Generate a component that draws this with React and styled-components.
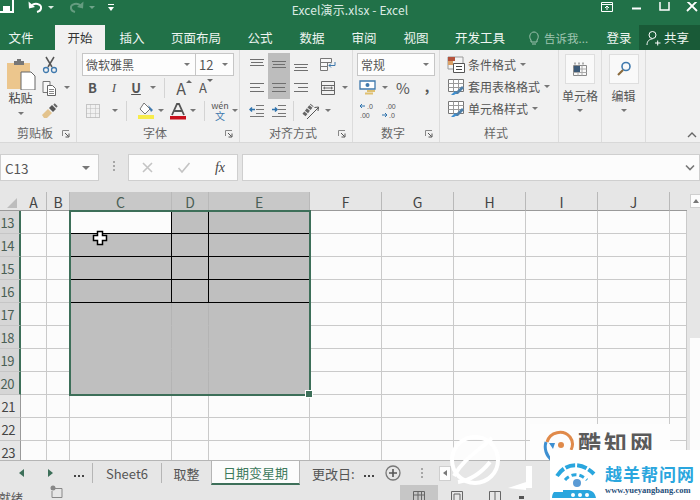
import styled, { createGlobalStyle } from 'styled-components';

const GlobalStyle = createGlobalStyle`
  html, body { margin: 0; padding: 0; background: #fff; }
  body { font-family: "Noto Sans CJK SC", "Noto Sans", sans-serif; color: #444; }
`;

const columns = [
  { name: 'A', w: 26 }, { name: 'B', w: 23 }, { name: 'C', w: 102, sel: true }, { name: 'D', w: 37, sel: true },
  { name: 'E', w: 101, sel: true }, { name: 'F', w: 72 }, { name: 'G', w: 72 }, { name: 'H', w: 72 },
  { name: 'I', w: 72 }, { name: 'J', w: 72 }, { name: '', w: 17 },
];
const rows = [13, 14, 15, 16, 17, 18, 19, 20, 21, 22, 23];
const tabs = [
  { label: '文件', w: 42, mr: 13 }, { label: '开始', w: 50, active: true, mr: 1 }, { label: '插入', w: 52 },
  { label: '页面布局', w: 76 }, { label: '公式', w: 52 }, { label: '数据', w: 52 }, { label: '审阅', w: 52 },
  { label: '视图', w: 52 }, { label: '开发工具', w: 76 },
];

const App = styled.div`
  position: relative;
  width: 700px;
  height: 500px;
  overflow: hidden;
  background: #e6e6e6;
`;

const TitleBar = styled.div`
  display: grid;
  grid-template-columns: 1fr auto 1fr;
  height: 25px;
  padding-bottom: 7px;
  box-sizing: border-box;
  align-items: center;
  background: #217148;
  color: #dcebe3;
  font-size: 12px;
`;
const Quick = styled.div`
  display: flex;
  align-items: center;
  margin-top: -4px;
`;
const WindowButtons = styled.div`
  display: flex;
  justify-content: flex-end;
  align-items: center;
  gap: 13px;
  margin-top: -4px;
  padding-right: 0;
`;
const TitleText = styled.div`
  letter-spacing: 0.1px;
`;

const TabRow = styled.div`
  display: flex;
  height: 25px;
  background: #217148;
  color: #eef5f1;
  font-size: 12.5px;
`;
const Tab = styled.div`
  width: ${p => p.$w}px;
  margin-right: ${p => p.$mr || 0}px;
  display: flex;
  align-items: center;
  justify-content: center;
  background: ${p => (p.$active ? '#f1f1f1' : 'transparent')};
  color: ${p => (p.$active ? '#333' : 'inherit')};
`;
const Hint = styled.div`
  width: 81px;
  display: flex;
  align-items: center;
  gap: 4px;
  padding-left: 10px;
  box-sizing: border-box;
  color: #9fc4b0;
  font-size: 11.5px;
  white-space: nowrap;
`;
const Login = styled.div`
  width: 40px;
  display: flex;
  align-items: center;
  justify-content: center;
`;
const Share = styled.div`
  flex: 1;
  display: flex;
  align-items: center;
  gap: 3px;
  padding-left: 7px;
  background: #195a37;
`;

const Ribbon = styled.div`
  display: flex;
  height: 93px;
  background: #f1f1f1;
  border-bottom: 1px solid #d8d8d8;
  box-sizing: border-box;
`;
const Group = styled.div`
  width: ${p => p.$w}px;
  box-sizing: border-box;
  border-right: 1px solid #dcdcdc;
  display: flex;
  flex-direction: column;
`;
const GroupBody = styled.div`
  height: 69px;
  padding: 3px 0 0 ${p => p.$pad || 0}px;
  box-sizing: border-box;
  display: flex;
  flex-direction: ${p => p.$dir || 'column'};
`;
const GroupLabel = styled.div`
  flex: 1;
  display: grid;
  grid-template-columns: 1fr auto 1fr;
  align-items: center;
  font-size: 12px;
  color: #666;
  padding: 2px 6px 0 0;
  margin-top: 1px;
`;
const Launcher = styled.svg`
  justify-self: end;
  width: 8px;
  height: 8px;
  margin-top: 4px;
`;
const ToolRow = styled.div`
  display: flex;
  align-items: center;
  height: 23px;
`;
const Slot = styled.div`
  width: ${p => p.$w}px;
  height: 23px;
  flex: none;
  display: flex;
  align-items: center;
  justify-content: center;
  background: ${p => (p.$on ? '#bdbdbd' : 'transparent')};
  font-size: ${p => p.$size || 12}px;
  font-weight: ${p => p.$bold ? 700 : 400};
  font-style: ${p => p.$italic ? 'italic' : 'normal'};
  color: #555;
`;
const Sep = styled.div`
  width: 1px;
  height: 20px;
  background: #d4d4d4;
  margin: 0 ${p => p.$m || 4}px;
  flex: none;
`;
const Caret = styled.span`
  flex: none;
  width: 0;
  height: 0;
  margin: ${p => p.$m || '0 0 0 5px'};
  border-left: 3px solid transparent;
  border-right: 3px solid transparent;
  border-top: 3px solid #777;
`;
const PasteCol = styled.div`
  width: 39px;
  padding-top: 5px;
  padding-left: 2px;
  box-sizing: border-box;
  display: flex;
  flex-direction: column;
  align-items: center;
  font-size: 12px;
  color: #444;
  line-height: 15px;
`;
const SmallCol = styled.div`
  display: flex;
  flex-direction: column;
`;
const Combo = styled.div`
  height: 23px;
  width: ${p => p.$w}px;
  margin-right: ${p => p.$mr || 0}px;
  box-sizing: border-box;
  padding: 0 5px 0 3px;
  border: 1px solid #c6c6c6;
  background: #fdfdfd;
  display: flex;
  align-items: center;
  justify-content: space-between;
  font-size: 12px;
  color: #555;
`;
const StyleRow = styled.div`
  height: 23px;
  display: flex;
  align-items: center;
  gap: 3px;
  font-size: 12px;
  color: #555;
`;
const BigButton = styled.div`
  width: 30px;
  height: 30px;
  box-sizing: border-box;
  background: #f9f9f9;
  border: 1px solid #dedede;
  display: flex;
  align-items: center;
  justify-content: center;
`;
const BigCol = styled.div`
  height: 100%;
  display: flex;
  flex-direction: column;
  align-items: center;
  font-size: 12px;
  color: #555;
  padding-top: 4px;
  box-sizing: border-box;
  line-height: 17px;
  gap: 3px;
`;
const RibbonEnd = styled.div`
  flex: 1;
  display: flex;
  justify-content: flex-end;
  align-items: flex-end;
  padding: 0 3px 3px 0;
`;

const FormulaRow = styled.div`
  height: 49px;
  box-sizing: border-box;
  padding-top: 11px;
  display: flex;
  align-items: flex-start;
  background: #e6e6e6;
`;
const FormulaBox = styled.div`
  width: ${p => p.$w}px;
  flex: ${p => (p.$w ? 'none' : 1)};
  height: 27px;
  margin-left: ${p => p.$ml || 0}px;
  box-sizing: border-box;
  border: 1px solid #cfcfcf;
  background: #fcfcfc;
  display: flex;
  align-items: center;
  justify-content: ${p => p.$justify || 'space-between'};
  padding: 0 4px;
  font-size: 13.5px;
  color: #555;
`;
const Dots = styled.div`
  display: flex;
  flex-direction: ${p => p.$row ? 'row' : 'column'};
  gap: 2px;
  margin: ${p => p.$m};
  i {
    display: block;
    width: 2px;
    height: 2px;
    background: ${p => p.$color || '#a6a6a6'};
  }
`;
const FxFont = styled.span`
  font-family: "Liberation Serif", serif;
  font-style: italic;
  font-size: 14px;
  color: #444;
`;

const SheetArea = styled.div`
  display: flex;
  height: 268px;
`;
const Sheet = styled.div`
  position: relative;
  width: 687px;
  height: 268px;
  overflow: hidden;
  display: grid;
  grid-template-columns: 21px ${columns.map(c => c.w + 'px').join(' ')};
  grid-template-rows: 19px;
  grid-auto-rows: 23px;
  background: #fcfcfc;
`;
const Corner = styled.div`
  background: #e6e6e6;
  border-bottom: 1px solid #9a9a9a;
  box-sizing: border-box;
  display: flex;
  justify-content: flex-end;
  align-items: flex-end;
  padding: 0 4px 2px 0;
  &::after {
    content: '';
    width: 0;
    height: 0;
    border-left: 10px solid transparent;
    border-bottom: 10px solid #bdbdbd;
  }
`;
const ColHead = styled.div`
  box-sizing: border-box;
  display: flex;
  align-items: center;
  justify-content: center;
  background: ${p => (p.$sel ? '#c8c8c8' : '#e6e6e6')};
  border-right: ${p => (p.$blank ? 0 : '1px solid #b9b9b9')};
  border-bottom: 1px solid #9a9a9a;
  font-size: 14px;
  color: ${p => (p.$sel ? '#4a5f55' : '#444')};
  padding-top: 2px;
`;
const RowHead = styled.div`
  box-sizing: border-box;
  display: flex;
  align-items: center;
  justify-content: flex-end;
  padding-right: 5px;
  overflow: hidden;
  background: ${p => (p.$sel ? '#d6d6d6' : '#e6e6e6')};
  border-right: ${p => (p.$sel ? '2px solid #3d6f59' : '1px solid #9a9a9a')};
  border-bottom: 1px solid #c6c6c6;
  font-size: 13px;
  letter-spacing: -0.5px;
  color: ${p => (p.$sel ? '#4a5f55' : '#444')};
`;
const Cell = styled.div`
  box-sizing: border-box;
  background: ${p => (p.$sel && !p.$active ? '#bfbfbf' : '#fcfcfc')};
  border-right: 1px solid ${p => (p.$right || '#cacaca')};
  border-bottom: 1px solid ${p => (p.$bottom || '#cacaca')};
`;
const Selection = styled.div`
  position: absolute;
  left: 69px;
  top: 18px;
  width: 242px;
  height: 186px;
  box-sizing: border-box;
  border: 2px solid #3d6f59;
  pointer-events: none;
`;
const Handle = styled.div`
  position: absolute;
  right: -4px;
  bottom: -4px;
  width: 6px;
  height: 6px;
  background: #3d6f59;
  border: 1px solid #fff;
`;
const CursorMark = styled.svg`
  position: absolute;
  left: 92px;
  top: 38px;
  width: 16px;
  height: 16px;
`;
const VScroll = styled.div`
  flex: 1;
  display: flex;
  flex-direction: column;
  align-items: flex-end;
  padding-top: 2px;
  box-sizing: border-box;
`;
const VButton = styled.div`
  width: 10px;
  height: 14px;
  box-sizing: border-box;
  background: #fcfcfc;
  border: 1px solid #cfcfcf;
  border-right: 0;
  display: flex;
  align-items: center;
  justify-content: center;
  &::after {
    content: '';
    border-left: 3px solid transparent;
    border-right: 3px solid transparent;
    border-bottom: 4px solid #777;
  }
`;
const VThumb = styled.div`
  width: 10px;
  height: 115px;
  margin-top: 130px;
  background: #fcfcfc;
`;

const SheetBar = styled.div`
  height: 25px;
  box-sizing: border-box;
  border-top: 1px solid #b5b5b5;
  display: flex;
  align-items: center;
  background: #e6e6e6;
  font-size: 13px;
  color: #555;
`;
const NavArrow = styled.div`
  width: 0;
  height: 0;
  flex: none;
  margin-left: ${p => p.$ml}px;
  border-top: 4px solid transparent;
  border-bottom: 4px solid transparent;
  ${p => (p.$back ? 'border-right: 5px solid #3d6f59;' : 'border-left: 5px solid #3d6f59;')}
`;
const SheetTab = styled.div`
  width: ${p => p.$w}px;
  height: ${p => (p.$active ? 24 : 20)}px;
  align-self: ${p => (p.$active ? 'flex-start' : 'center')};
  flex: none;
  box-sizing: border-box;
  display: flex;
  align-items: center;
  justify-content: center;
  white-space: nowrap;
  background: ${p => (p.$active ? '#fcfcfc' : 'transparent')};
  color: ${p => (p.$active ? '#3d7a5c' : 'inherit')};
  border-left: ${p => (p.$line || p.$active ? '1px solid #b5b5b5' : '0')};
  border-right: ${p => (p.$active ? '1px solid #b5b5b5' : '0')};
  border-bottom: ${p => (p.$active ? '2px solid #3d6f59' : '0')};
`;
const AddSheet = styled.svg`
  width: 16px;
  height: 16px;
  flex: none;
  margin-left: 11px;
`;
const HButton = styled.div`
  width: 12px;
  height: 15px;
  flex: none;
  margin-left: 16px;
  box-sizing: border-box;
  background: #fcfcfc;
  border: 1px solid #cfcfcf;
  display: flex;
  align-items: center;
  justify-content: center;
  &::after {
    content: '';
    border-top: 3px solid transparent;
    border-bottom: 3px solid transparent;
    border-right: 4px solid #777;
  }
`;

const StatusBar = styled.div`
  height: 15px;
  display: flex;
  background: #e6e6e6;
  font-size: 12px;
  color: #555;
  overflow: hidden;
`;
const StatusText = styled.div`
  width: 44px;
  margin-left: -1px;
  padding-top: 4px;
  line-height: 17px;
`;
const ViewGroup = styled.div`
  margin-left: 336px;
  display: flex;
`;
const ViewButton = styled.div`
  width: 38px;
  height: 15px;
  display: flex;
  justify-content: center;
  padding-top: 5px;
  box-sizing: border-box;
  background: ${p => (p.$on ? '#c6c6c6' : 'transparent')};
`;
const ZoomMinus = styled.div`
  width: 5px;
  height: 3px;
  margin: 11px 0 0 5px;
  background: #555;
`;

const Mark = styled.svg`
  position: absolute;
  left: ${p => p.$x}px;
  top: ${p => p.$y}px;
`;
const KuzhiText = styled.div`
  position: absolute;
  left: 530px;
  top: 424px;
  width: 140px;
  height: 36px;
  padding-left: 48px;
  box-sizing: border-box;
  background: #fdfdfd;
  font-size: 23px;
  font-weight: 700;
  line-height: 36px;
  color: #5a5a5a;
  letter-spacing: 3px;
  white-space: nowrap;
`;
const YueBox = styled.div`
  position: absolute;
  left: 550px;
  top: 450px;
  width: 150px;
  height: 50px;
  background: #fff;
  box-sizing: border-box;
  padding: 14px 0 0 55px;
`;
const YueName = styled.div`
  font-size: 17px;
  line-height: 20px;
  font-weight: 700;
  color: #2aa6de;
  letter-spacing: 1px;
  white-space: nowrap;
`;
const YueUrl = styled.div`
  font-family: "Liberation Serif", serif;
  font-size: 8.5px;
  font-weight: 700;
  line-height: 13px;
  color: #1f4e79;
  white-space: nowrap;
`;

const Svg = ({ w = 16, h = 16, children, style }) => (
  <svg width={w} height={h} viewBox={`0 0 ${w} ${h}`} fill="none" style={style}>{children}</svg>
);

const LauncherIcon = () => (
  <Launcher viewBox="0 0 8 8" fill="none">
    <path d="M.5 6V.5H7" stroke="#888" />
    <path d="M3 3l3.5 3.5M7 3.5V7H3.5" stroke="#555" />
  </Launcher>
);

const AlignIcon = ({ v, h = 'c' }) => {
  const y = v === 't' ? 2 : v === 'b' ? 7 : v === 'm' ? 4 : 3;
  const lines = v === 'full' ? [3, 7, 11] : [y, y + 3, y + 6];
  const widths = h === 'l' ? [[1, 15], [1, 11], [1, 15]] : h === 'r' ? [[1, 15], [5, 15], [1, 15]] : [[1, 15], [2, 14], [1, 15]];
  return (
    <Svg>
      {lines.map((ly, i) => (
        <path key={i} d={`M${widths[i][0]} ${ly}.5H${widths[i][1]}`} stroke="#6f6f6f" />
      ))}
    </Svg>
  );
};

const TableThumb = () => (
  <Svg w={18} h={18}>
    <path d="M1.5 2.5h15v12h-15z" fill="#fff" stroke="#777" />
    <path d="M1.5 6.5h15M1.5 10.5h15M6.5 2.5v12M11.5 2.5v12" stroke="#9a9a9a" />
    <path d="M8 16l7-7 2 2-6 6H7z" fill="#4f7fa8" />
    <path d="M4 18l4-4 2 2-3 2z" fill="#3f8fd0" />
  </Svg>
);

const decimalFont = { fontFamily: 'Liberation Sans, sans-serif' };

export default function ExcelWindow() {
  return (
    <App>
      <GlobalStyle />
      <TitleBar>
        <Quick>
          <Svg w={17} h={14} style={{ marginLeft: -2 }}>
            <path d="M1 -2h14v14H1z" stroke="#fff" strokeWidth="2" />
            <path d="M5 6h7v6H5z" fill="#fff" />
          </Svg>
          <Svg w={18} h={14} style={{ marginLeft: 12 }}>
            <path d="M4 6.5c3-4.5 11-3 10 2-.4 2-2 3-4 3.5" stroke="#fff" strokeWidth="2" />
            <path d="M1.500 1.500l.5 7 6-1.500z" fill="#fff" />
          </Svg>
          <Caret style={{ borderTopColor: '#dcebe3' }} $m="0 0 0 3px" />
          <Svg w={18} h={14} style={{ marginLeft: 13, opacity: 0.3 }}>
            <path d="M14 6.500c-3-4.500-11-3-10 2 .4 2 2 3 4 3.500" stroke="#fff" strokeWidth="2" />
            <path d="M16.500 1.500l-.5 7-6-1.500z" fill="#fff" />
          </Svg>
          <Caret style={{ borderTopColor: '#6fa389' }} $m="0 0 0 4px" />
          <Svg w={8} h={9} style={{ marginLeft: 12 }}>
            <path d="M1 1.500h6" stroke="#fff" />
            <path d="M1 4h6L4 8z" fill="#fff" />
          </Svg>
        </Quick>
        <TitleText>Excel演示.xlsx - Excel</TitleText>
        <WindowButtons>
          <Svg w={13} h={11}>
            <path d="M.5.5h11v9H.5z" stroke="#fff" />
            <path d="M.5 2.500h11" stroke="#fff" />
            <path d="M6 8V4.500M4 6l2-2 2 2" stroke="#fff" />
          </Svg>
          <Svg w={16} h={11} style={{ marginLeft: 2 }}><path d="M3 6.500h9" stroke="#fff" strokeWidth="2" /></Svg>
          <Svg w={14} h={11}><path d="M2 -1h9v9H2z" stroke="#fff" strokeWidth="1.500" /></Svg>
          <Svg w={15} h={11}><path d="M2 -1l10 10M12 -1L2 9" stroke="#fff" strokeWidth="1.800" /></Svg>
        </WindowButtons>
      </TitleBar>

      <TabRow>
        {tabs.map(tab => (
          <Tab key={tab.label} $w={tab.w} $mr={tab.mr} $active={tab.active}>{tab.label}</Tab>
        ))}
        <Hint>
          <Svg w={12} h={16}>
            <path d="M3 10C.500 7 2 2 6 2s5.500 5 3 8v2H3z" stroke="#9fc4b0" />
            <path d="M4 14h4" stroke="#9fc4b0" />
          </Svg>
          告诉我...
        </Hint>
        <Login>登录</Login>
        <Share>
          <Svg w={15} h={16}>
            <circle cx="6.500" cy="5" r="3.500" stroke="#fff" />
            <path d="M1 15c0-4 2.500-6 5.500-6M9 13h5.500M11.700 10.500v5" stroke="#fff" />
          </Svg>
          共享
        </Share>
      </TabRow>

      <Ribbon>
        <Group $w={77}>
          <GroupBody $dir="row">
            <PasteCol>
              <Svg w={30} h={32}>
                <path d="M1 5h23v26H1z" fill="#ecc68d" />
                <path d="M8 3h3V1h4v2h3v4H8z" fill="#777" />
                <path d="M15 14h10l4 4v14H15z" fill="#fff" stroke="#666" />
              </Svg>
              <span>粘贴</span>
              <Caret $m="7px 0 0" />
            </PasteCol>
            <SmallCol>
              <Slot $w={22}>
                <Svg w={16} h={18}>
                  <path d="M4 1l6 10M12 1L6 11" stroke="#555" strokeWidth="1.500" />
                  <circle cx="4" cy="14" r="2.500" stroke="#3f79ad" strokeWidth="1.300" />
                  <circle cx="12" cy="14" r="2.500" stroke="#3f79ad" strokeWidth="1.300" />
                </Svg>
              </Slot>
              <ToolRow>
                <Slot $w={20}>
                  <Svg w={16} h={16}>
                    <path d="M2 1.500h7v11H2z" stroke="#777" fill="#f8f8f8" />
                    <path d="M6.500 5.500h5l3 3v7h-8z" stroke="#666" fill="#fff" />
                    <path d="M8 9.500h5M8 11.500h5M8 13.500h5" stroke="#888" />
                  </Svg>
                </Slot>
                <Caret $m="0 0 0 5px" />
              </ToolRow>
              <Slot $w={22}>
                <Svg w={18} h={16}>
                  <path d="M1 12l6-6 4 4-5 5H3z" fill="#e3c38d" />
                  <path d="M8 5l3-3 4 4-3 3z" fill="#555" />
                  <path d="M13 1l3 3" stroke="#666" strokeWidth="2" />
                </Svg>
              </Slot>
            </SmallCol>
          </GroupBody>
          <GroupLabel><span /><span>剪贴板</span><LauncherIcon /></GroupLabel>
        </Group>

        <Group $w={163}>
          <GroupBody $pad={5}>
            <ToolRow>
              <Combo $w={114}>微软雅黑<Caret /></Combo>
              <Combo $w={39} style={{ marginLeft: -1, fontSize: 13 }}>12<Caret /></Combo>
            </ToolRow>
            <ToolRow>
              <Slot $w={21} $bold $size={13}>B</Slot>
              <Slot $w={22} $italic $size={13} style={{ fontFamily: 'Liberation Serif, serif' }}>I</Slot>
              <Slot $w={22} $bold $size={13} style={{ textDecoration: 'underline' }}>U</Slot>
              <Caret $m="0 0 0 3px" />
              <Sep $m={8} />
              <Slot $w={22} $size={16}>
                A
                <Svg w={6} h={10} style={{ marginBottom: 8 }}><path d="M0 4l3-3 3 3z" fill="#666" /></Svg>
              </Slot>
              <Slot $w={22} $size={13}>
                A
                <Svg w={6} h={12} style={{ marginBottom: 8 }}><path d="M0 1h6L3 4z" fill="#666" /></Svg>
              </Slot>
            </ToolRow>
            <ToolRow>
              <Slot $w={22}>
                <Svg w={16} h={16}>
                  <path d="M1.500 1.500h13v13h-13z" stroke="#999" strokeDasharray="1 1" />
                  <path d="M1.500 5.500h13M1.500 10.500h13M5.500 1.500v13M10.500 1.500v13" stroke="#bbb" strokeDasharray="1 1" />
                </Svg>
              </Slot>
              <Caret $m="0 0 0 8px" />
              <Sep $m={8} />
              <Slot $w={22}>
                <Svg w={18} h={18}>
                  <path d="M7 1l6 6-5 5-5-5z" fill="#fff" stroke="#777" />
                  <path d="M11 3l5 5-2 2z" fill="#3f79ad" />
                  <path d="M1 13h16v4H1z" fill="#f7ec4b" />
                </Svg>
              </Slot>
              <Caret $m="0 0 0 1px" />
              <Slot $w={22} style={{ marginLeft: 3 }}>
                <Svg w={18} h={18}>
                  <path d="M3 13L8 2h2l5 11M5.500 9h7" stroke="#555" strokeWidth="1.800" />
                  <path d="M1 14h16v3.500H1z" fill="#c8101c" />
                </Svg>
              </Slot>
              <Caret $m="0 0 0 1px" />
              <Sep $m={8} />
              <Slot $w={22} style={{ marginLeft: -4, flexDirection: 'column', fontSize: 9, lineHeight: '10px' }}>
                <span>wén</span>
                <span style={{ color: '#3f79ad', fontSize: 10 }}>文</span>
              </Slot>
              <Caret $m="0 0 0 1px" />
            </ToolRow>
          </GroupBody>
          <GroupLabel><span /><span>字体</span><LauncherIcon /></GroupLabel>
        </Group>

        <Group $w={113}>
          <GroupBody $pad={6}>
            <ToolRow>
              <Slot $w={22}><AlignIcon v="t" /></Slot>
              <Slot $w={22} $on><AlignIcon v="m" /></Slot>
              <Slot $w={22}><AlignIcon v="b" /></Slot>
              <Slot $w={24} style={{ marginLeft: 4 }}>
                <Svg w={18} h={16}>
                  <path d="M1.500 1.500h11v4h-11zM1.500 5.500h7v4h-7zM1.500 9.500h7v4h-7z" stroke="#777" fill="#f8f8f8" />
                  <path d="M16 5v3.500h-6M12 6.500l-2 2 2 2" stroke="#3f79ad" />
                </Svg>
              </Slot>
            </ToolRow>
            <ToolRow>
              <Slot $w={22}><AlignIcon v="full" h="l" /></Slot>
              <Slot $w={22} $on><AlignIcon v="full" /></Slot>
              <Slot $w={22}><AlignIcon v="full" h="r" /></Slot>
              <Slot $w={24} style={{ marginLeft: 4 }}>
                <Svg w={16} h={16}>
                  <path d="M1.500 1.500h13v13h-13zM1.500 5.500h13M1.500 10.500h13" stroke="#666" />
                  <path d="M4 8h8M5 6.800L3.500 8 5 9.200M11 6.800L12.500 8 11 9.200" stroke="#444" strokeWidth=".8" />
                </Svg>
              </Slot>
              <Caret $m="0 0 0 2px" />
            </ToolRow>
            <ToolRow>
              <Slot $w={22}>
                <Svg>
                  <path d="M7 2.500h8M7 6.500h8M7 10.500h8M1 13.500h14" stroke="#777" />
                  <path d="M6 6.500H1M3 4.500l-2 2 2 2" stroke="#2f73ad" strokeWidth="1.500" />
                </Svg>
              </Slot>
              <Slot $w={22}>
                <Svg>
                  <path d="M7 2.500h8M7 6.500h8M7 10.500h8M1 13.500h14" stroke="#777" />
                  <path d="M1 6.500h5M4 4.500l2 2-2 2" stroke="#2f73ad" strokeWidth="1.500" />
                </Svg>
              </Slot>
              <Sep $m={3} />
              <Slot $w={24} style={{ marginLeft: 2 }}>
                <Svg w={20} h={18}>
                  <path d="M3 13L11 3" stroke="#666" strokeWidth="4" strokeDasharray="3 1" />
                  <path d="M6 17L17 6M13.500 5.500l4-.500-.500 4" stroke="#555" />
                </Svg>
              </Slot>
              <Caret $m="0 0 0 2px" />
            </ToolRow>
          </GroupBody>
          <GroupLabel><span /><span>对齐方式</span><LauncherIcon /></GroupLabel>
        </Group>

        <Group $w={87}>
          <GroupBody $pad={4}>
            <ToolRow><Combo $w={78}>常规<Caret /></Combo></ToolRow>
            <ToolRow>
              <Slot $w={24}>
                <Svg w={20} h={16}>
                  <path d="M1 1h15v8H1z" stroke="#3f79ad" strokeWidth="1.300" fill="#fff" />
                  <circle cx="8.500" cy="5" r="2" fill="#3f79ad" />
                  <path d="M8 11h8M6 13.500h8" stroke="#dfc070" strokeWidth="2" />
                </Svg>
              </Slot>
              <Caret $m="0 0 0 1px" />
              <Slot $w={24} $size={15} style={{ marginLeft: 3 }}>%</Slot>
              <Slot $w={18} $size={14} $bold style={{ marginLeft: 3, paddingBottom: 3 }}>,</Slot>
            </ToolRow>
            <ToolRow>
              <Slot $w={22}>
                <Svg w={18} h={18}>
                  <path d="M1 4h5M3 2L1 4l2 2" stroke="#2f73ad" />
                  <text x="8" y="7" fontSize="7" fill="#555" style={decimalFont}>.0</text>
                  <text x="1" y="16" fontSize="7" fill="#555" style={decimalFont}>.00</text>
                </Svg>
              </Slot>
              <Slot $w={22}>
                <Svg w={18} h={18}>
                  <text x="5" y="7" fontSize="7" fill="#555" style={decimalFont}>.00</text>
                  <path d="M1 13h5M4 11l2 2-2 2" stroke="#2f73ad" />
                  <text x="8" y="16" fontSize="7" fill="#555" style={decimalFont}>.0</text>
                </Svg>
              </Slot>
            </ToolRow>
          </GroupBody>
          <GroupLabel><span /><span>数字</span><LauncherIcon /></GroupLabel>
        </Group>

        <Group $w={119}>
          <GroupBody $pad={7}>
            <StyleRow>
              <Svg w={18} h={18}>
                <path d="M1 2h15v12H1z" fill="#f4f4f4" stroke="#999" />
                <path d="M1 2h7v4H1z" fill="#b5533c" />
                <path d="M1 6h5v4H1z" fill="#d9a066" />
                <path d="M6.500 8.500h11v9h-11z" fill="#fff" stroke="#555" />
                <path d="M9 11.500h6M9 14.500h6" stroke="#444" />
              </Svg>
              条件格式<Caret $m="0 0 0 1px" />
            </StyleRow>
            <StyleRow><TableThumb />套用表格格式<Caret $m="0 0 0 1px" /></StyleRow>
            <StyleRow><TableThumb />单元格样式<Caret $m="0 0 0 1px" /></StyleRow>
          </GroupBody>
          <GroupLabel><span /><span>样式</span><span /></GroupLabel>
        </Group>

        <Group $w={43}>
          <BigCol>
            <BigButton>
              <Svg w={18} h={18}>
                <path d="M2.500 5.500h13v10h-13z" stroke="#888" />
                <path d="M2.500 9h13M2.500 12.500h13M7 5.500v10M11 5.500v10" stroke="#aaa" />
                <path d="M3 6h6v6H3z" fill="#3c5a78" />
                <path d="M4 2.500v2M8 2.500v2M12 2.500v2" stroke="#666" />
              </Svg>
            </BigButton>
            <span>单元格</span>
            <Caret $m="2px 0 0" />
          </BigCol>
        </Group>
        <Group $w={44}>
          <BigCol>
            <BigButton>
              <Svg w={18} h={18}>
                <circle cx="11" cy="6.500" r="4" stroke="#3f79ad" strokeWidth="1.600" />
                <path d="M8 10l-5 5" stroke="#8a6a3c" strokeWidth="2.200" />
              </Svg>
            </BigButton>
            <span>编辑</span>
            <Caret $m="2px 0 0" />
          </BigCol>
        </Group>
        <RibbonEnd>
          <Svg w={10} h={8}><path d="M1 6l4-4 4 4" stroke="#666" strokeWidth="1.400" /></Svg>
        </RibbonEnd>
      </Ribbon>

      <FormulaRow>
        <FormulaBox $w={99} style={{ paddingRight: 8 }}>C13<Caret style={{ borderLeftWidth: 4, borderRightWidth: 4, borderTopWidth: 4 }} /></FormulaBox>
        <Dots $m="7px 13px 0 14px"><i /><i /><i /></Dots>
        <FormulaBox $w={110} $ml={0} style={{ padding: '0 12px 0 12px' }}>
          <Svg w={13} h={13}><path d="M2 2l9 9M11 2l-9 9" stroke="#c4c4c4" strokeWidth="1.600" /></Svg>
          <Svg w={14} h={13}><path d="M1.500 7l3.500 4 7.500-9" stroke="#c4c4c4" strokeWidth="1.600" /></Svg>
          <FxFont>fx</FxFont>
        </FormulaBox>
        <FormulaBox $ml={4} $justify="flex-end">
          <Svg w={10} h={8}><path d="M1 1.500l4 4 4-4" stroke="#777" strokeWidth="1.600" /></Svg>
        </FormulaBox>
      </FormulaRow>

      <SheetArea>
        <Sheet>
          <Corner />
          {columns.map(col => (
            <ColHead key={col.name} $sel={col.sel} $blank={!col.name}>{col.name}</ColHead>
          ))}
          {rows.map(row => {
            const inSel = row <= 20;
            return [
              <RowHead key={row} $sel={inSel}>{row}</RowHead>,
              ...columns.map((col, i) => {
                const sel = inSel && col.sel;
                const bordered = sel && row <= 16;
                return (
                  <Cell
                    key={`${row}-${i}`}
                    $sel={sel}
                    $active={row === 13 && col.name === 'C'}
                    $right={bordered && col.name !== 'E' ? '#000' : sel ? '#b4b4b4' : undefined}
                    $bottom={bordered ? '#000' : sel ? '#bfbfbf' : undefined}
                  />
                );
              }),
            ];
          })}
          <Selection><Handle /></Selection>
          <CursorMark viewBox="0 0 16 16">
            <path d="M5.500 1.500h5v4h4v5h-4v4h-5v-4h-4v-5h4z" fill="#fff" stroke="#000" strokeWidth="1.500" />
          </CursorMark>
        </Sheet>
        <VScroll>
          <VButton />
          <VThumb />
        </VScroll>
      </SheetArea>

      <SheetBar>
        <NavArrow $back $ml={19} />
        <NavArrow $ml={24} />
        <Dots $row $color="#444" $m="6px 0 0 21px"><i /><i /><i /></Dots>
        <SheetTab $w={69} $line style={{ marginLeft: 8 }}>Sheet6</SheetTab>
        <SheetTab $w={50} $line>取整</SheetTab>
        <SheetTab $w={89} $active>日期变星期</SheetTab>
        <SheetTab $w={64} style={{ justifyContent: 'flex-start', paddingLeft: 12 }}>更改日:</SheetTab>
        <Dots $row $color="#444" $m="6px 0 0 0"><i /><i /><i /></Dots>
        <AddSheet viewBox="0 0 16 16" fill="none">
          <circle cx="8" cy="8" r="7" stroke="#777" strokeWidth="1.300" />
          <path d="M4 8h8M8 4v8" stroke="#555" strokeWidth="1.600" />
        </AddSheet>
        <Dots $m="0 0 0 20px"><i /><i /><i /></Dots>
        <HButton />
      </SheetBar>

      <StatusBar>
        <StatusText>就绪</StatusText>
        <Svg w={14} h={15} style={{ flex: 'none', marginLeft: 7 }}>
          <circle cx="3" cy="3" r="2.500" fill="#888" />
          <path d="M5 3.500h7v9H2V6" stroke="#888" />
        </Svg>
        <ViewGroup>
          <ViewButton $on>
            <Svg w={14} h={12}><path d="M1.500 1.500h11v12h-11zM1.500 5h11M6 1.500v12M9.500 1.500v12" stroke="#666" /></Svg>
          </ViewButton>
          <ViewButton>
            <Svg w={14} h={12}><path d="M1.500 1.500h11v12h-11zM4 4h6v9H4z" stroke="#666" /></Svg>
          </ViewButton>
          <ViewButton>
            <Svg w={14} h={12}><path d="M1.500 1.500h11v12h-11zM7 1.500v12" stroke="#666" /></Svg>
          </ViewButton>
        </ViewGroup>
        <ZoomMinus />
      </StatusBar>

      <KuzhiText>酷知网</KuzhiText>
      <Mark $x={446} $y={432} width="92" height="62" viewBox="0 0 92 62" fill="none">
        <circle cx="29" cy="28" r="23" stroke="#fff" strokeWidth="4" />
        <path d="M8 44C18 26 34 18 46 6M12 50c14-2 24-10 32-20" stroke="#fff" strokeWidth="4" />
        <path d="M80 34h6v22h-6zM62 56l18-6v8z" fill="#fff" />
      </Mark>
      <Mark $x={543} $y={428} width="32" height="36" viewBox="0 0 32 36" fill="none">
        <path d="M4 14C7 4 20 1 27 9c3 4 3 9 1 13" stroke="#e08a4a" strokeWidth="3" />
        <path d="M3 14c-2 6 0 14 6 18" stroke="#3d8fd1" strokeWidth="3" />
        <path d="M6 15h6l-2 6z" fill="#3d8fd1" />
        <circle cx="18" cy="17" r="3" fill="#e08a4a" />
      </Mark>
      <YueBox>
        <YueName>越羊帮问网</YueName>
        <YueUrl>www.yueyangbang.com</YueUrl>
      </YueBox>
      <Mark $x={552} $y={458} width="48" height="42" viewBox="0 0 48 42" fill="none">
        <path d="M5 18C14 4 30 4 42 16" stroke="#2aa6de" strokeWidth="4" strokeDasharray="10 2" />
        <path d="M13 22c6-7 15-7 22 0" stroke="#2aa6de" strokeWidth="3" strokeDasharray="5 3" />
        <circle cx="25" cy="25" r="4" fill="#5b9bd5" />
        <path d="M2 34h9v-2h24c4 0 8 2 9 8H0c0-3 1-5 2-6z" fill="#2aa6de" />
        <circle cx="21" cy="37" r="2" fill="#fff" />
        <circle cx="28" cy="37" r="2" fill="#fff" />
        <circle cx="35" cy="37" r="2" fill="#fff" />
      </Mark>
    </App>
  );
}
